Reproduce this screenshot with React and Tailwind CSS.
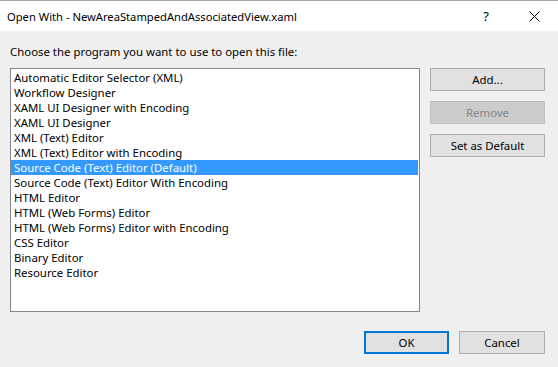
import React from "react";

const items = [
  "Automatic Editor Selector (XML)",
  "Workflow Designer",
  "XAML UI Designer with Encoding",
  "XAML UI Designer",
  "XML (Text) Editor",
  "XML (Text) Editor with Encoding",
  "Source Code (Text) Editor (Default)",
  "Source Code (Text) Editor With Encoding",
  "HTML Editor",
  "HTML (Web Forms) Editor",
  "HTML (Web Forms) Editor with Encoding",
  "CSS Editor",
  "Binary Editor",
  "Resource Editor",
];

const font = { fontFamily: '"Noto Sans", "Segoe UI", sans-serif' };

export default function App() {
  return (
    <div
      className="w-[558px] h-[367px] bg-[#f0f0f0] flex flex-col border-t border-[#aaaaaa] text-[11.4px] text-black overflow-hidden"
      style={font}
    >
      <div className="h-[30px] bg-white flex items-center shrink-0">
        <div className="pl-[7px] flex-1 text-[11.2px] leading-none pt-[1px]">
          Open With - NewAreaStampedAndAssociatedView.xaml
        </div>
        <div className="w-[12px] text-[13px] leading-none text-center mr-[37px]">?</div>
        <svg width="11" height="11" viewBox="0 0 11 11" className="mr-[18px]">
          <path d="M0.5 0.5 L10.5 10.5 M10.5 0.5 L0.5 10.5" stroke="#000" strokeWidth="1" />
        </svg>
      </div>
      <div className="pl-[10px] pt-[13px] h-[37px] leading-[15px]">
        Choose the program you want to use to open this file:
      </div>
      <div className="flex pl-[10px]">
        <div className="w-[410px] h-[244px] bg-white border border-[#828790] py-px pr-px">
          {items.map((t, i) => (
            <div
              key={t}
              className={
                "h-[15px] leading-[15px] pl-[3px] whitespace-nowrap " +
                (i === 6 ? "bg-[#3399ff] text-white" : "")
              }
            >
              {t}
            </div>
          ))}
        </div>
        <div className="ml-[10px] flex flex-col gap-[10px]">
          <div className="w-[115px] h-[23px] bg-[#e1e1e1] border border-[#adadad] flex items-center justify-center">
            Add...
          </div>
          <div className="w-[115px] h-[23px] bg-[#cccccc] border border-[#bfbfbf] text-[#838383] flex items-center justify-center">
            Remove
          </div>
          <div className="w-[115px] h-[23px] bg-[#e1e1e1] border border-[#adadad] flex items-center justify-center">
            Set as Default
          </div>
        </div>
      </div>
      <div className="flex pl-[364px] pt-[19px] gap-[10px]">
        <div className="w-[85px] h-[23px] bg-[#e1e1e1] border-2 border-[#0078d7] flex items-center justify-center">
          OK
        </div>
        <div className="w-[86px] h-[23px] bg-[#e1e1e1] border border-[#adadad] flex items-center justify-center">
          Cancel
        </div>
      </div>
    </div>
  );
}
